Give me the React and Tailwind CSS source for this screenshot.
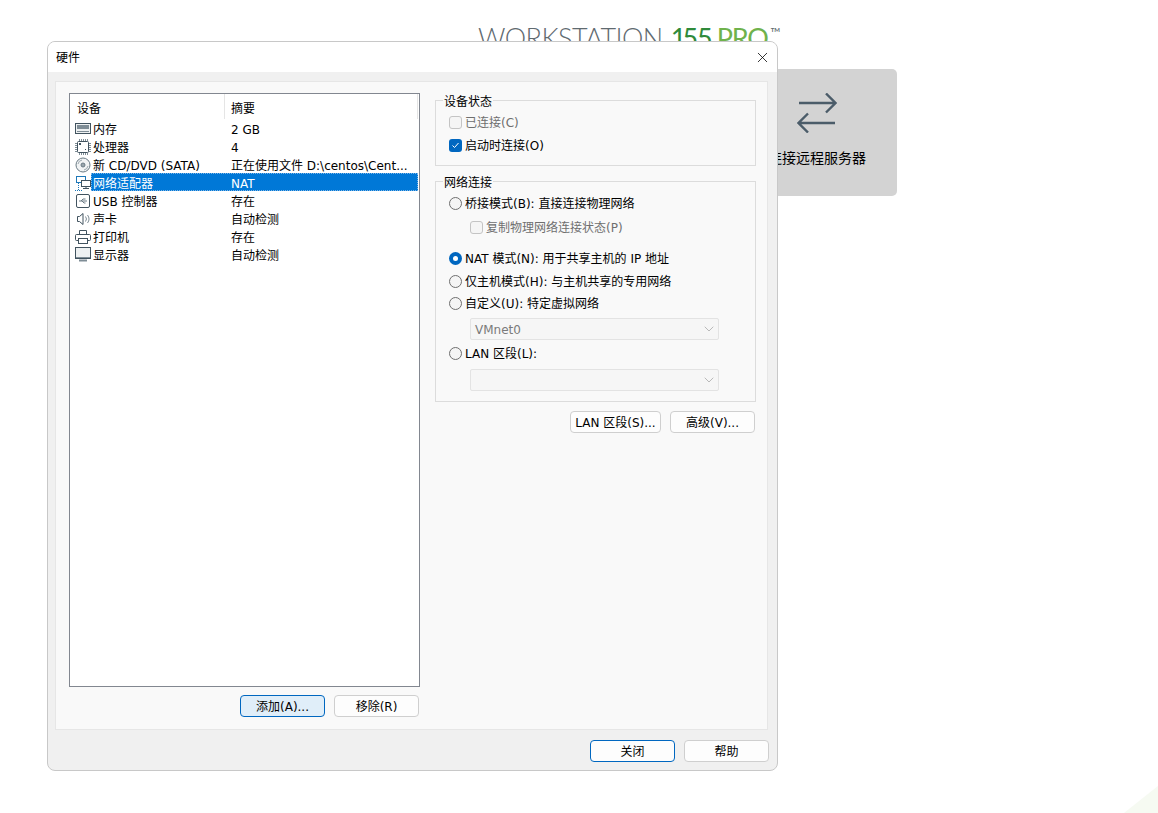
import React from 'react';
import { X, ChevronDown } from 'lucide-react';

const FONT = 'font-["DejaVu_Sans","Noto_Sans_CJK_SC",sans-serif]';

const MemoryIcon = () => (
  <svg width="16" height="16" viewBox="0 0 16 16" fill="none" stroke="#41535f">
    <rect x="0.5" y="2.5" width="15" height="10" fill="#eef1f2" />
    <rect x="2" y="4" width="12" height="4" fill="#7f8d96" stroke="none" />
    <path d="M2 10.500h12" stroke="#7f8d96" />
  </svg>
);

const CpuIcon = () => (
  <svg width="16" height="16" viewBox="0 0 16 16" fill="none" stroke="#41535f">
    <rect x="2.5" y="2.5" width="11" height="11" rx="1" fill="#fff" />
    <path d="M4.500 0v2M6.500 0v2M8.500 0v2M10.500 0v2M12.500 0v2M4.500 14v2M6.500 14v2M8.500 14v2M10.500 14v2M12.500 14v2M0 4.500h2M0 6.500h2M0 8.500h2M0 10.500h2M0 12.500h2M14 4.500h2M14 6.500h2M14 8.500h2M14 10.500h2M14 12.500h2" stroke="#7f8d96" />
    <path d="M4 4h2v2H4zM11 11h-1v-1h1z" fill="#41535f" stroke="none" />
  </svg>
);

const DiscIcon = () => (
  <svg width="16" height="16" viewBox="0 0 16 16" fill="none" stroke="#6b7b85">
    <circle cx="8" cy="8" r="7" fill="#f1f3f4" />
    <circle cx="8" cy="8" r="2" fill="#9aa6ad" />
    <path d="M9 13a5 5 0 0 0 4-4M7 3a5 5 0 0 0-4 4" stroke="#9aa6ad" />
  </svg>
);

const NetworkIcon = () => (
  <svg width="16" height="16" viewBox="0 0 16 16" fill="none" stroke="#1f78b8">
    <rect x="1.500" y="1.500" width="9" height="6" />
    <rect x="6.500" y="5.500" width="9" height="6" fill="#fff" stroke="#41535f" />
    <path d="M11 11.500v2M8 13.500h6" stroke="#41535f" />
    <path d="M0 15.500h7M3.500 8v7" strokeDasharray="1 1" />
  </svg>
);

const UsbIcon = () => (
  <svg width="16" height="16" viewBox="0 0 16 16" fill="none" stroke="#41535f">
    <rect x="1.500" y="1.500" width="13" height="13" rx="1.500" />
    <path d="M4 8h8M6 8l2-2h2.500M7 8l2 2h1.500" stroke="#6b7b85" />
  </svg>
);

const SoundIcon = () => (
  <svg width="16" height="16" viewBox="0 0 16 16" fill="none" stroke="#41535f">
    <path d="M2.500 5.500h2l3.500-3v11l-3.500-3h-2z" />
    <path d="M10.500 5.500a4 4 0 0 1 0 5M12.500 4a6.500 6.500 0 0 1 0 8" stroke="#7f8d96" />
  </svg>
);

const PrinterIcon = () => (
  <svg width="16" height="16" viewBox="0 0 16 16" fill="none" stroke="#41535f">
    <path d="M4.500 5.500v-4h7v4" />
    <rect x="0.500" y="5.500" width="15" height="6" rx="1" />
    <rect x="3.500" y="9.500" width="9" height="5" fill="#fff" />
  </svg>
);

const MonitorIcon = () => (
  <svg width="16" height="16" viewBox="0 0 16 16" fill="none" stroke="#41535f">
    <rect x="0.500" y="0.500" width="15" height="11" fill="#eef1f2" />
    <path d="M1 10.500h14" stroke="#7f8d96" />
    <path d="M4 13.500h8" strokeWidth="2" stroke="#7f8d96" />
  </svg>
);

const devices = [
  { name: '内存', summary: '2 GB', icon: MemoryIcon },
  { name: '处理器', summary: '4', icon: CpuIcon },
  { name: '新 CD/DVD (SATA)', summary: '正在使用文件 D:\\centos\\Cent...', icon: DiscIcon },
  { name: '网络适配器', summary: 'NAT', icon: NetworkIcon, selected: true },
  { name: 'USB 控制器', summary: '存在', icon: UsbIcon },
  { name: '声卡', summary: '自动检测', icon: SoundIcon },
  { name: '打印机', summary: '存在', icon: PrinterIcon },
  { name: '显示器', summary: '自动检测', icon: MonitorIcon },
];

const DeviceRow = ({ device }) => {
  const Icon = device.icon;
  return (
    <div className="flex h-[18px] items-center">
      <div className="mt-[2px] flex w-[21px] shrink-0 justify-start pl-[5px]"><Icon /></div>
      <div className={device.selected ? 'flex h-full w-[327px] items-center border border-dotted border-[#7fb5e6] bg-[#0078d7] text-white' : 'flex h-full w-[327px] items-center border border-transparent'}>
        <span className="w-[133px] shrink-0 whitespace-nowrap pl-px pt-[4px]">{device.name}</span>
        <span className="whitespace-nowrap pl-[6px] pt-[4px]">{device.summary}</span>
      </div>
    </div>
  );
};

const Button = ({ children, primary, tinted, width = 'w-[85px]' }) => (
  <button
    className={`flex h-[22px] ${width} items-center justify-center whitespace-nowrap rounded-[4px] border pt-[2px] text-xs ${primary ? 'border-[#0067c0]' : 'border-[#cfcfcf]'} ${tinted ? 'bg-[#e0eef9]' : 'bg-[#fdfdfd]'}`}
  >
    {children}
  </button>
);

const Check = ({ checked, disabled, label }) => (
  <div className={`flex h-5 items-center ${disabled ? 'text-[#6f6f6f]' : ''}`}>
    {checked ? (
      <span className="flex h-[13px] w-[13px] items-center justify-center rounded-[3px] bg-[#0067c0]">
        <svg width="9" height="9" viewBox="0 0 9 9" fill="none" stroke="#fff"><path d="M1.500 4.500l2 2 4-4.500" /></svg>
      </span>
    ) : (
      <span className="h-[13px] w-[13px] rounded-[3px] border border-[#c4c4c4] bg-[#f5f5f5]" />
    )}
    <span className="ml-[3px] whitespace-nowrap pt-[2px]">{label}</span>
  </div>
);

const Radio = ({ checked, label }) => (
  <div className="flex h-5 items-center">
    {checked ? (
      <span className="flex h-[13px] w-[13px] items-center justify-center rounded-full bg-[#0067c0]">
        <span className="h-[5px] w-[5px] rounded-full bg-white" />
      </span>
    ) : (
      <span className="h-[13px] w-[13px] rounded-full border border-[#6f6f6f] bg-[#f5f5f5]" />
    )}
    <span className="ml-[3px] whitespace-nowrap pt-[2px]">{label}</span>
  </div>
);

const Select = ({ value }) => (
  <div className="ml-[21px] flex h-[22px] w-[249px] items-center justify-between rounded-[2px] border border-[#e3e3e3] bg-[#f6f6f6] pl-[4px] pr-[1px] text-[#7a7a7a]">
    <span className="pt-[2px]">{value}</span>
    <ChevronDown size={16} strokeWidth={1} className="text-[#9a9a9a]" />
  </div>
);

const Group = ({ title, className, children }) => (
  <div className={`relative border border-[#dcdcdc] pl-[13px] pt-[11px] ${className}`}>
    <span className="absolute -top-[7px] left-[7px] bg-[#f9f9f9] px-px leading-[16px]">{title}</span>
    {children}
  </div>
);

export default function App() {
  return (
    <div className={`relative h-[813px] w-full overflow-hidden bg-white ${FONT}`}>
      {/* stuff behind the dialog */}
      <div className="absolute left-[478px] top-[20px] flex items-start whitespace-nowrap font-['Lato',sans-serif] text-[27px] leading-[36px] font-light text-[#5f6a70]">
        <span className="tracking-[-0.55px]">WORKSTATION</span>
        <span className="ml-[8px] font-normal tracking-[-3.8px] text-[#2f8a3a]">15.5</span>
        <span className="ml-[8px] font-normal tracking-[-1.2px] text-[#6fb24c]">PRO</span>
        <span className="ml-[3px] mt-[7px] text-[6px] leading-[6px] font-bold">TM</span>
      </div>
      <div className="absolute left-[737px] top-[69px] flex h-[127px] w-[160px] flex-col items-center rounded-[5px] bg-[#d3d3d3] pt-[24px]">
        <svg width="40" height="40" viewBox="0 0 40 40" fill="none" stroke="#4b5c69" strokeWidth="2.4">
          <path d="M2 10h36.500M29 .5 38.500 10 29 19.500" />
          <path d="M38 30H2M11 20.500 1.500 30 11 39.500" />
        </svg>
        <span className="mt-[15px] text-sm leading-5 text-black">连接远程服务器</span>
      </div>
      <svg className="absolute bottom-0 right-0" width="34" height="27" viewBox="0 0 34 27">
        <polygon points="34,0 34,27 0,27" fill="#f6faf2" />
      </svg>

      {/* dialog */}
      <div className="absolute left-[47px] top-[41px] flex h-[730px] w-[731px] flex-col overflow-hidden rounded-[8px] border border-[#c8c8c8] bg-[#f0f0f0] text-xs text-black">
        <div className="flex h-[30px] shrink-0 items-center justify-between bg-white pl-2 pr-[6px]">
          <span className="pt-[2px]">硬件</span>
          <X size={17} strokeWidth={1.1} />
        </div>
        <div className="ml-[7px] mt-[9px] flex h-[649px] w-[713px] border border-[#e6e6e6] bg-[#f9f9f9] pl-[13px] pt-[11px]">
          {/* device list */}
          <div className="flex w-[351px] shrink-0 flex-col">
            <div className="h-[594px] border border-[#828790] bg-white">
              <div className="flex h-[25px] items-center border-[#e5e5e5]">
                <span className="flex h-full w-[155px] items-center border-r border-[#e5e5e5] pl-[7px] pt-[4px]">设备</span>
                <span className="flex h-full w-[193px] items-center border-r border-[#e5e5e5] pl-[6px] pt-[4px]">摘要</span>
              </div>
              {devices.map((d) => <DeviceRow key={d.name} device={d} />)}
            </div>
            <div className="mt-2 flex justify-end gap-[9px] pr-px">
              <Button primary tinted>添加(A)...</Button>
              <Button>移除(R)</Button>
            </div>
          </div>

          {/* settings */}
          <div className="ml-[15px] w-[321px] shrink-0 pt-[7px]">
            <Group title="设备状态" className="h-[66px]">
              <Check disabled label="已连接(C)" />
              <div className="mt-[3px]"><Check checked label="启动时连接(O)" /></div>
            </Group>
            <Group title="网络连接" className="mt-[15px] h-[221px]">
              <Radio label="桥接模式(B): 直接连接物理网络" />
              <div className="ml-[21px] mt-1"><Check disabled label="复制物理网络连接状态(P)" /></div>
              <div className="mt-[11px]"><Radio checked label="NAT 模式(N): 用于共享主机的 IP 地址" /></div>
              <div className="mt-[3px]"><Radio label="仅主机模式(H): 与主机共享的专用网络" /></div>
              <div className="mt-[2px]"><Radio label="自定义(U): 特定虚拟网络" /></div>
              <div className="mt-[5px]"><Select value="VMnet0" /></div>
              <div className="mt-[3px]"><Radio label="LAN 区段(L):" /></div>
              <div className="mt-[6px]"><Select value="" /></div>
            </Group>
            <div className="mt-[9px] flex justify-end gap-[9px] pr-px">
              <Button width="w-[91px]">LAN 区段(S)...</Button>
              <Button>高级(V)...</Button>
            </div>
          </div>
        </div>
        <div className="mt-[10px] flex justify-end gap-[9px] pr-2">
          <Button primary>关闭</Button>
          <Button>帮助</Button>
        </div>
      </div>
    </div>
  );
}
